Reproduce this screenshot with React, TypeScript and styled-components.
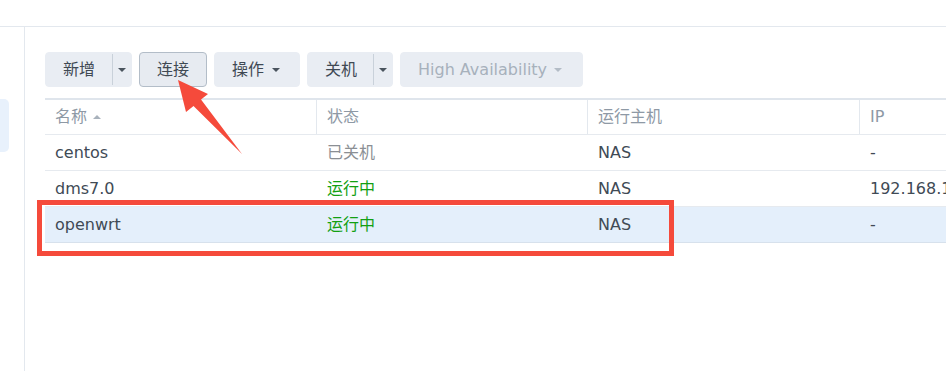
import React from "react";
import styled, { createGlobalStyle } from "styled-components";

const Global = createGlobalStyle`
  html, body { margin: 0; padding: 0; background: #fff; overflow: hidden; }
  body { font-family: "DejaVu Sans", "Noto Sans CJK SC", sans-serif; }
  * { box-sizing: border-box; }
`;

const Page = styled.div`
  position: relative;
  width: 946px;
  height: 371px;
  overflow: hidden;
  display: flex;
  flex-direction: column;
  background: #fff;
`;

const TopBar = styled.div`
  height: 27px;
  flex: none;
  border-bottom: 1px solid #e3e8ee;
`;

const Body = styled.div`
  flex: 1;
  display: flex;
  min-height: 0;
`;

const Sidebar = styled.div`
  width: 25px;
  flex: none;
  border-right: 1px solid #e3e8ee;
  padding-top: 72px;
`;

const NavItem = styled.div`
  width: 9px;
  height: 53px;
  background: #e8f1fc;
  border-radius: 0 5px 5px 0;
`;

const Content = styled.div`
  flex: 1;
  padding: 25px 0 0 20px;
  display: flex;
  flex-direction: column;
  min-width: 0;
`;

const Toolbar = styled.div`
  display: flex;
  gap: 7px;
  height: 35px;
`;

const Btn = styled.div<{ $bordered?: boolean; $disabled?: boolean }>`
  height: 35px;
  display: flex;
  align-items: stretch;
  background: ${(p) => (p.$bordered ? "#e7ebf1" : "#e9edf3")};
  border: 1px solid ${(p) => (p.$bordered ? "#b3bdc8" : "#e9edf3")};
  border-radius: 4px;
  color: ${(p) => (p.$disabled ? "#a7b1bc" : "#3f4953")};
  font-size: 16px;
  line-height: 20px;
`;

const BtnLabel = styled.div<{ $w: number; $pl: number }>`
  width: ${(p) => p.$w}px;
  padding-left: ${(p) => p.$pl}px;
  display: flex;
  align-items: center;
  white-space: nowrap;
`;

const SplitPart = styled.div`
  width: 19px;
  border-left: 1px solid #c9d1da;
  margin: 1px 0;
  display: flex;
  align-items: center;
  justify-content: center;
`;

const Caret = styled.span<{ $ml?: number; $c?: string }>`
  display: inline-block;
  width: 0;
  height: 0;
  margin-left: ${(p) => p.$ml ?? 0}px;
  border-left: 4px solid transparent;
  border-right: 4px solid transparent;
  border-top: 4px solid ${(p) => p.$c ?? "#4a545e"};
`;

const Table = styled.div`
  margin-top: 11px;
  width: 1000px;
  border-top: 2px solid #dfe5ec;
  font-size: 16px;
  line-height: 20px;
`;

const Row = styled.div<{ $header?: boolean; $selected?: boolean }>`
  display: grid;
  grid-template-columns: 271px 271px 272px 1fr;
  height: ${(p) => (p.$header ? 35 : 36)}px;
  border-bottom: 1px solid ${(p) => (p.$selected ? "#d7e1ec" : "#e6eaef")};
  background: ${(p) => (p.$selected ? "#e4effb" : "#fff")};
  color: ${(p) => (p.$header ? "#8e99a5" : "#404a55")};
`;

const Cell = styled.div<{ $first?: boolean; $sep?: boolean; $tone?: "off" | "run" }>`
  display: flex;
  align-items: center;
  padding-left: 10px;
  border-left: ${(p) => (p.$first ? "0" : `1px solid ${p.$sep ? "#e3e8ee" : "transparent"}`)};
  white-space: nowrap;
  color: ${(p) => (p.$tone === "off" ? "#8b8f94" : p.$tone === "run" ? "#12a012" : "inherit")};
`;

const SortUp = styled.span`
  display: inline-block;
  width: 0;
  height: 0;
  margin-left: 6px;
  border-left: 4px solid transparent;
  border-right: 4px solid transparent;
  border-bottom: 4px solid #a9b2bc;
`;

const Highlight = styled.div`
  position: absolute;
  left: 37px;
  top: 200px;
  width: 637px;
  height: 56px;
  border: 5px solid #f54a3b;
  pointer-events: none;
`;

const ArrowSvg = styled.svg`
  position: absolute;
  left: 0;
  top: 0;
  pointer-events: none;
`;

type RowData = { name: string; status: string; tone: "off" | "run"; host: string; ip: string; selected?: boolean };

const rows: RowData[] = [
  { name: "centos", status: "已关机", tone: "off", host: "NAS", ip: "-" },
  { name: "dms7.0", status: "运行中", tone: "run", host: "NAS", ip: "192.168.1.100" },
  { name: "openwrt", status: "运行中", tone: "run", host: "NAS", ip: "-", selected: true },
];

export default function App() {
  return (
    <Page>
      <Global />
      <TopBar />
      <Body>
        <Sidebar>
          <NavItem />
        </Sidebar>
        <Content>
          <Toolbar>
            <Btn>
              <BtnLabel $w={66} $pl={17}>新增</BtnLabel>
              <SplitPart>
                <Caret />
              </SplitPart>
            </Btn>
            <Btn $bordered>
              <BtnLabel $w={66} $pl={17}>连接</BtnLabel>
            </Btn>
            <Btn>
              <BtnLabel $w={84} $pl={17}>
                操作
                <Caret $ml={8} />
              </BtnLabel>
            </Btn>
            <Btn>
              <BtnLabel $w={65} $pl={17}>关机</BtnLabel>
              <SplitPart>
                <Caret />
              </SplitPart>
            </Btn>
            <Btn $disabled>
              <BtnLabel $w={181} $pl={17}>
                High Availability
                <Caret $ml={7} $c="#b3bcc6" />
              </BtnLabel>
            </Btn>
          </Toolbar>
          <Table>
            <Row $header>
              <Cell $first>
                名称
                <SortUp />
              </Cell>
              <Cell $sep>状态</Cell>
              <Cell $sep>运行主机</Cell>
              <Cell $sep>IP</Cell>
            </Row>
            {rows.map((r) => (
              <Row key={r.name} $selected={r.selected}>
                <Cell $first>{r.name}</Cell>
                <Cell $tone={r.tone}>{r.status}</Cell>
                <Cell>{r.host}</Cell>
                <Cell>{r.ip}</Cell>
              </Row>
            ))}
          </Table>
        </Content>
      </Body>
      <Highlight />
      <ArrowSvg width="946" height="371" viewBox="0 0 946 371">
        <polygon
          points="178,80 208,94 201,99.5 242,154 193.5,106 186,112"
          fill="#f54a3b"
        />
      </ArrowSvg>
    </Page>
  );
}
